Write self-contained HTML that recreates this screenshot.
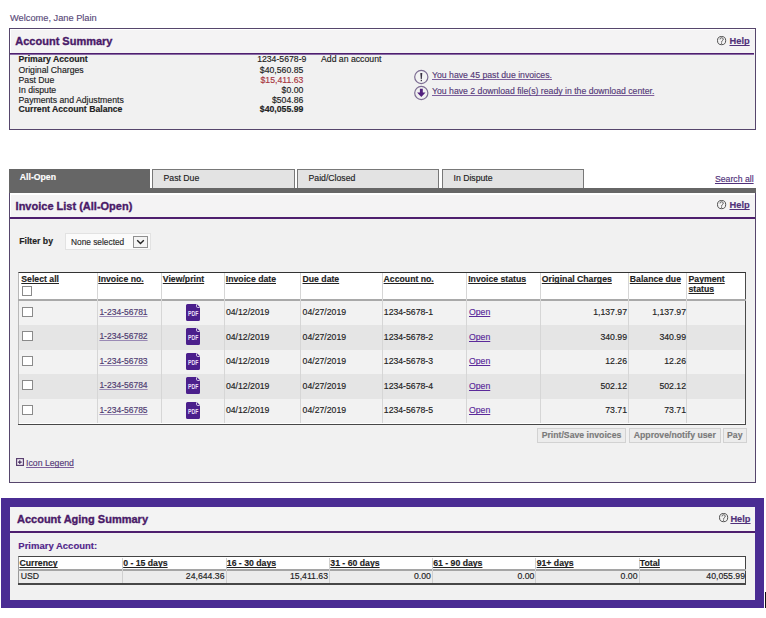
<!DOCTYPE html>
<html><head><meta charset="utf-8"><style>
html,body{margin:0;padding:0;background:#fff;width:766px;height:618px;overflow:hidden;position:relative}
body>div,body>svg{position:absolute}
.t{white-space:nowrap;font-family:"Liberation Sans",sans-serif;-webkit-text-stroke:0.15px currentColor}
svg text{font-family:"Liberation Sans",sans-serif}
</style></head><body>
<div class="t" style="top:11.94px;font-size:9.25px;line-height:12px;color:#5a4a7a;left:10px;">Welcome, Jane Plain</div>
<div style="left:9px;top:28px;width:747px;height:102px;background:#f1f1f1;border:1px solid #56466c;box-sizing:border-box;"></div>
<div style="left:10px;top:29px;width:745px;height:24px;background:#f4f3f4;border-top:1px solid #fff;border-left:1px solid #fff;box-sizing:border-box;"></div>
<div style="left:10px;top:53px;width:744px;height:1px;background:#4e1f6e;"></div>
<div style="left:10px;top:54px;width:744px;height:1px;background:#8a6aa5;"></div>
<div class="t" style="top:35.16px;font-size:11px;line-height:12px;color:#4a1a68;font-weight:bold;left:15.3px;-webkit-text-stroke:0.35px currentColor;">Account Summary</div>
<svg style="left:717px;top:36.3px;width:10px;height:10px" viewBox="0 0 10 10"><circle cx="4.6" cy="4.6" r="4.1" fill="none" stroke="#3d3d3d" stroke-width="0.9"/><path d="M3 3.4a1.6 1.6 0 1 1 2.3 1.4c-.5.3-.7.6-.7 1.2v.5" fill="none" stroke="#3d3d3d" stroke-width="0.8"/><rect x="4.1" y="6.8" width="0.9" height="0.9" fill="#3d3d3d"/></svg>
<div class="t" style="top:34.63px;font-size:9.3px;line-height:12px;color:#50307a;font-weight:bold;text-decoration:underline;text-decoration-skip-ink:none;left:729.5px;">Help</div>
<div class="t" style="top:53.42px;font-size:8.7px;line-height:12px;color:#222;font-weight:bold;left:18.5px;">Primary Account</div>
<div class="t" style="top:53.42px;font-size:8.7px;line-height:12px;color:#222;right:459.6px;text-align:right;">1234-5678-9</div>
<div class="t" style="top:63.82px;font-size:8.7px;line-height:12px;color:#222;left:18.5px;">Original Charges</div>
<div class="t" style="top:63.82px;font-size:8.7px;line-height:12px;color:#222;right:462.7px;text-align:right;">$40,560.85</div>
<div class="t" style="top:73.82px;font-size:8.7px;line-height:12px;color:#222;left:18.5px;">Past Due</div>
<div class="t" style="top:73.82px;font-size:8.7px;line-height:12px;color:#a8363e;right:462.7px;text-align:right;">$15,411.63</div>
<div class="t" style="top:83.52px;font-size:8.7px;line-height:12px;color:#222;left:18.5px;">In dispute</div>
<div class="t" style="top:83.52px;font-size:8.7px;line-height:12px;color:#222;right:462.7px;text-align:right;">$0.00</div>
<div class="t" style="top:93.62px;font-size:8.7px;line-height:12px;color:#222;left:18.5px;">Payments and Adjustments</div>
<div class="t" style="top:93.62px;font-size:8.7px;line-height:12px;color:#222;right:462.7px;text-align:right;">$504.86</div>
<div class="t" style="top:102.92px;font-size:8.7px;line-height:12px;color:#222;font-weight:bold;left:18.5px;">Current Account Balance</div>
<div class="t" style="top:102.92px;font-size:8.7px;line-height:12px;color:#222;font-weight:bold;right:462.7px;text-align:right;">$40,055.99</div>
<div class="t" style="top:53.12px;font-size:8.7px;line-height:12px;color:#222;left:321px;">Add an account</div>
<svg style="left:413px;top:69px;width:17px;height:32px" viewBox="0 0 17 32"><circle cx="8.3" cy="8" r="6.6" fill="#fff" fill-opacity="0.2" stroke="#7d6d93" stroke-width="1.2"/><path d="M7.3 4h2l-.5 6.2h-1z" fill="#3a3344"/><rect x="7.7" y="11" width="1.3" height="1.2" fill="#3a3344"/><circle cx="8.3" cy="24" r="6.6" fill="none" stroke="#7d6d93" stroke-width="1.2"/><path d="M6.9 19.8h2.9v3.6h2.7l-4.2 4.5-4.2-4.5h2.8z" fill="#52207e"/></svg>
<div class="t" style="top:68.82px;font-size:8.7px;line-height:12px;color:#553a78;text-decoration:underline;text-decoration-skip-ink:none;left:432px;text-decoration-color:#7d5f9d;">You have 45 past due invoices.</div>
<div class="t" style="top:84.92px;font-size:8.7px;line-height:12px;color:#553a78;text-decoration:underline;text-decoration-skip-ink:none;left:432px;text-decoration-color:#7d5f9d;">You have 2 download file(s) ready in the download center.</div>
<div style="left:9px;top:169px;width:141px;height:24px;background:#666;"></div>
<div class="t" style="top:171.32px;font-size:8.7px;line-height:12px;color:#fff;font-weight:bold;left:19.8px;">All-Open</div>
<div style="left:152px;top:169px;width:143px;height:20px;background:#e3e3e3;border:1px solid #787878;border-bottom:none;box-sizing:border-box;"></div>
<div class="t" style="top:172.12px;font-size:8.7px;line-height:12px;color:#222;left:163.5px;">Past Due</div>
<div style="left:297px;top:169px;width:142.3px;height:20px;background:#e3e3e3;border:1px solid #787878;border-bottom:none;box-sizing:border-box;"></div>
<div class="t" style="top:172.12px;font-size:8.7px;line-height:12px;color:#222;left:308.5px;">Paid/Closed</div>
<div style="left:442px;top:169px;width:142px;height:20px;background:#e3e3e3;border:1px solid #787878;border-bottom:none;box-sizing:border-box;"></div>
<div class="t" style="top:172.12px;font-size:8.7px;line-height:12px;color:#222;left:453.5px;">In Dispute</div>
<div style="left:9px;top:188px;width:747px;height:5px;background:#666;"></div>
<div class="t" style="top:173.12px;font-size:8.7px;line-height:12px;color:#50307a;text-decoration:underline;text-decoration-skip-ink:none;right:12.4px;text-align:right;">Search all</div>
<div style="left:9px;top:193px;width:747px;height:290px;background:#f1f1f1;border:1px solid #56466c;border-top:none;box-sizing:border-box;"></div>
<div style="left:10px;top:193px;width:745px;height:24px;background:#f4f3f4;border-top:2px solid #fff;border-left:1px solid #fff;box-sizing:border-box;"></div>
<div style="left:10px;top:217px;width:745px;height:2px;background:#4e1f6e;"></div>
<div class="t" style="top:200.06px;font-size:11px;line-height:12px;color:#4a1a68;font-weight:bold;left:15.6px;-webkit-text-stroke:0.35px currentColor;">Invoice List (All-Open)</div>
<svg style="left:717px;top:200.3px;width:10px;height:10px" viewBox="0 0 10 10"><circle cx="4.6" cy="4.6" r="4.1" fill="none" stroke="#3d3d3d" stroke-width="0.9"/><path d="M3 3.4a1.6 1.6 0 1 1 2.3 1.4c-.5.3-.7.6-.7 1.2v.5" fill="none" stroke="#3d3d3d" stroke-width="0.8"/><rect x="4.1" y="6.8" width="0.9" height="0.9" fill="#3d3d3d"/></svg>
<div class="t" style="top:198.63px;font-size:9.3px;line-height:12px;color:#50307a;font-weight:bold;text-decoration:underline;text-decoration-skip-ink:none;left:729.5px;">Help</div>
<div class="t" style="top:235.12px;font-size:8.7px;line-height:12px;color:#222;font-weight:bold;left:19.2px;">Filter by</div>
<div style="left:65px;top:232.5px;width:86px;height:17.8px;background:#fbfbfb;border:1px solid #e2e2e2;box-sizing:border-box;"></div>
<div class="t" style="top:235.79px;font-size:9.1px;line-height:12px;color:#2a2a2a;left:70.6px;transform:scaleX(0.915);transform-origin:0 0;">None selected</div>
<div style="left:132.6px;top:236px;width:15.4px;height:12px;background:#f4f4f4;border:1px solid #8f8f8f;box-sizing:border-box;"></div>
<svg style="left:136px;top:239.3px;width:9px;height:6px" viewBox="0 0 9 6"><path d="M1.2 1.2l3.3 3.2 3.3-3.2" fill="none" stroke="#222" stroke-width="1.4"/></svg>
<div style="left:18.4px;top:272px;width:727.6px;height:153px;background:#fff;border-left:1px solid #b8b8b8;border-right:1px solid #4a4a4a;border-top:1px solid #333;box-sizing:border-box;"></div>
<div style="left:19.4px;top:300.5px;width:725.6px;height:24.5px;background:#f2f2f2;"></div>
<div style="left:19.4px;top:325.0px;width:725.6px;height:24.5px;background:#e5e5e5;"></div>
<div style="left:19.4px;top:349.5px;width:725.6px;height:24.5px;background:#f2f2f2;"></div>
<div style="left:19.4px;top:374.0px;width:725.6px;height:24.5px;background:#e5e5e5;"></div>
<div style="left:19.4px;top:398.5px;width:725.6px;height:24.5px;background:#f2f2f2;"></div>
<div style="left:18.4px;top:299px;width:727.6px;height:2px;background:#a9a9a9;"></div>
<div style="left:18.4px;top:423.5px;width:727.6px;height:1.5px;background:#474747;"></div>
<div style="left:97.2px;top:273px;width:1.0px;height:150.2px;background:#d6d6d6;"></div>
<div style="left:161.2px;top:273px;width:1.0px;height:150.2px;background:#d6d6d6;"></div>
<div style="left:224.1px;top:273px;width:1.0px;height:150.2px;background:#d6d6d6;"></div>
<div style="left:300.4px;top:273px;width:1.0px;height:150.2px;background:#d6d6d6;"></div>
<div style="left:381.9px;top:273px;width:1.0px;height:150.2px;background:#d6d6d6;"></div>
<div style="left:466.4px;top:273px;width:1.0px;height:150.2px;background:#d6d6d6;"></div>
<div style="left:540.3px;top:273px;width:1.0px;height:150.2px;background:#d6d6d6;"></div>
<div style="left:628.4px;top:273px;width:1.0px;height:150.2px;background:#d6d6d6;"></div>
<div style="left:686.4px;top:273px;width:1.0px;height:150.2px;background:#d6d6d6;"></div>
<div class="t" style="top:273.12px;font-size:8.7px;line-height:12px;color:#222;font-weight:bold;text-decoration:underline;text-decoration-skip-ink:none;left:21.3px;">Select all</div>
<div class="t" style="top:273.12px;font-size:8.7px;line-height:12px;color:#222;font-weight:bold;text-decoration:underline;text-decoration-skip-ink:none;left:98.3px;">Invoice no.</div>
<div class="t" style="top:273.12px;font-size:8.7px;line-height:12px;color:#222;font-weight:bold;text-decoration:underline;text-decoration-skip-ink:none;left:162.8px;">View/print</div>
<div class="t" style="top:273.12px;font-size:8.7px;line-height:12px;color:#222;font-weight:bold;text-decoration:underline;text-decoration-skip-ink:none;left:225.8px;">Invoice date</div>
<div class="t" style="top:273.12px;font-size:8.7px;line-height:12px;color:#222;font-weight:bold;text-decoration:underline;text-decoration-skip-ink:none;left:302.5px;">Due date</div>
<div class="t" style="top:273.12px;font-size:8.7px;line-height:12px;color:#222;font-weight:bold;text-decoration:underline;text-decoration-skip-ink:none;left:383.6px;">Account no.</div>
<div class="t" style="top:273.12px;font-size:8.7px;line-height:12px;color:#222;font-weight:bold;text-decoration:underline;text-decoration-skip-ink:none;left:468.2px;">Invoice status</div>
<div class="t" style="top:273.12px;font-size:8.7px;line-height:12px;color:#222;font-weight:bold;text-decoration:underline;text-decoration-skip-ink:none;left:541.8px;">Original Charges</div>
<div class="t" style="top:273.12px;font-size:8.7px;line-height:12px;color:#222;font-weight:bold;text-decoration:underline;text-decoration-skip-ink:none;left:629.8px;">Balance due</div>
<div class="t" style="top:273.12px;font-size:8.7px;line-height:12px;color:#222;font-weight:bold;text-decoration:underline;text-decoration-skip-ink:none;left:688.5px;">Payment</div>
<div class="t" style="top:283.32px;font-size:8.7px;line-height:12px;color:#222;font-weight:bold;text-decoration:underline;text-decoration-skip-ink:none;left:688.5px;">status</div>
<div style="left:21.9px;top:286.4px;width:10.1px;height:10.0px;background:#fff;border:1px solid #8a8a8a;box-sizing:border-box;"></div>
<div style="left:22.4px;top:306.5px;width:10.2px;height:10.3px;background:#fff;border:1px solid #8a8a8a;box-sizing:border-box;"></div>
<div class="t" style="top:305.79px;font-size:8.5px;line-height:12px;color:#4d3a70;text-decoration:underline;text-decoration-skip-ink:none;left:99.4px;text-decoration-color:#9a8ab5;">1-234-56781</div>
<svg style="left:186px;top:303.8px;width:14px;height:17px" viewBox="0 0 14 17"><path d="M1.5 0h9.2l3.3 3.3v12.2a1.5 1.5 0 0 1-1.5 1.5h-11A1.5 1.5 0 0 1 0 15.5v-14A1.5 1.5 0 0 1 1.5 0z" fill="#4b1f8c"/><path d="M10.5 0.3v2a1.2 1.2 0 0 0 1.2 1.2h2" fill="none" stroke="#e8dcf5" stroke-width="0.9"/><text x="7.2" y="12.3" font-size="7" font-weight="bold" text-anchor="middle" fill="#eadff7" font-family="Liberation Sans" textLength="10.4" lengthAdjust="spacingAndGlyphs">PDF</text></svg>
<div class="t" style="top:306.12px;font-size:8.7px;line-height:12px;color:#222;left:225.9px;">04/12/2019</div>
<div class="t" style="top:306.12px;font-size:8.7px;line-height:12px;color:#222;left:302.6px;">04/27/2019</div>
<div class="t" style="top:306.12px;font-size:8.7px;line-height:12px;color:#222;left:383.8px;">1234-5678-1</div>
<div class="t" style="top:306.12px;font-size:8.7px;line-height:12px;color:#5b2a9a;text-decoration:underline;text-decoration-skip-ink:none;left:469px;">Open</div>
<div class="t" style="top:306.12px;font-size:8.7px;line-height:12px;color:#222;right:139px;text-align:right;">1,137.97</div>
<div class="t" style="top:306.12px;font-size:8.7px;line-height:12px;color:#222;right:80px;text-align:right;">1,137.97</div>
<div style="left:22.4px;top:331.0px;width:10.2px;height:10.3px;background:#fff;border:1px solid #8a8a8a;box-sizing:border-box;"></div>
<div class="t" style="top:330.29px;font-size:8.5px;line-height:12px;color:#4d3a70;text-decoration:underline;text-decoration-skip-ink:none;left:99.4px;text-decoration-color:#9a8ab5;">1-234-56782</div>
<svg style="left:186px;top:328.3px;width:14px;height:17px" viewBox="0 0 14 17"><path d="M1.5 0h9.2l3.3 3.3v12.2a1.5 1.5 0 0 1-1.5 1.5h-11A1.5 1.5 0 0 1 0 15.5v-14A1.5 1.5 0 0 1 1.5 0z" fill="#4b1f8c"/><path d="M10.5 0.3v2a1.2 1.2 0 0 0 1.2 1.2h2" fill="none" stroke="#e8dcf5" stroke-width="0.9"/><text x="7.2" y="12.3" font-size="7" font-weight="bold" text-anchor="middle" fill="#eadff7" font-family="Liberation Sans" textLength="10.4" lengthAdjust="spacingAndGlyphs">PDF</text></svg>
<div class="t" style="top:330.62px;font-size:8.7px;line-height:12px;color:#222;left:225.9px;">04/12/2019</div>
<div class="t" style="top:330.62px;font-size:8.7px;line-height:12px;color:#222;left:302.6px;">04/27/2019</div>
<div class="t" style="top:330.62px;font-size:8.7px;line-height:12px;color:#222;left:383.8px;">1234-5678-2</div>
<div class="t" style="top:330.62px;font-size:8.7px;line-height:12px;color:#5b2a9a;text-decoration:underline;text-decoration-skip-ink:none;left:469px;">Open</div>
<div class="t" style="top:330.62px;font-size:8.7px;line-height:12px;color:#222;right:139px;text-align:right;">340.99</div>
<div class="t" style="top:330.62px;font-size:8.7px;line-height:12px;color:#222;right:80px;text-align:right;">340.99</div>
<div style="left:22.4px;top:355.5px;width:10.2px;height:10.3px;background:#fff;border:1px solid #8a8a8a;box-sizing:border-box;"></div>
<div class="t" style="top:354.79px;font-size:8.5px;line-height:12px;color:#4d3a70;text-decoration:underline;text-decoration-skip-ink:none;left:99.4px;text-decoration-color:#9a8ab5;">1-234-56783</div>
<svg style="left:186px;top:352.8px;width:14px;height:17px" viewBox="0 0 14 17"><path d="M1.5 0h9.2l3.3 3.3v12.2a1.5 1.5 0 0 1-1.5 1.5h-11A1.5 1.5 0 0 1 0 15.5v-14A1.5 1.5 0 0 1 1.5 0z" fill="#4b1f8c"/><path d="M10.5 0.3v2a1.2 1.2 0 0 0 1.2 1.2h2" fill="none" stroke="#e8dcf5" stroke-width="0.9"/><text x="7.2" y="12.3" font-size="7" font-weight="bold" text-anchor="middle" fill="#eadff7" font-family="Liberation Sans" textLength="10.4" lengthAdjust="spacingAndGlyphs">PDF</text></svg>
<div class="t" style="top:355.12px;font-size:8.7px;line-height:12px;color:#222;left:225.9px;">04/12/2019</div>
<div class="t" style="top:355.12px;font-size:8.7px;line-height:12px;color:#222;left:302.6px;">04/27/2019</div>
<div class="t" style="top:355.12px;font-size:8.7px;line-height:12px;color:#222;left:383.8px;">1234-5678-3</div>
<div class="t" style="top:355.12px;font-size:8.7px;line-height:12px;color:#5b2a9a;text-decoration:underline;text-decoration-skip-ink:none;left:469px;">Open</div>
<div class="t" style="top:355.12px;font-size:8.7px;line-height:12px;color:#222;right:139px;text-align:right;">12.26</div>
<div class="t" style="top:355.12px;font-size:8.7px;line-height:12px;color:#222;right:80px;text-align:right;">12.26</div>
<div style="left:22.4px;top:380.0px;width:10.2px;height:10.3px;background:#fff;border:1px solid #8a8a8a;box-sizing:border-box;"></div>
<div class="t" style="top:379.29px;font-size:8.5px;line-height:12px;color:#4d3a70;text-decoration:underline;text-decoration-skip-ink:none;left:99.4px;text-decoration-color:#9a8ab5;">1-234-56784</div>
<svg style="left:186px;top:377.3px;width:14px;height:17px" viewBox="0 0 14 17"><path d="M1.5 0h9.2l3.3 3.3v12.2a1.5 1.5 0 0 1-1.5 1.5h-11A1.5 1.5 0 0 1 0 15.5v-14A1.5 1.5 0 0 1 1.5 0z" fill="#4b1f8c"/><path d="M10.5 0.3v2a1.2 1.2 0 0 0 1.2 1.2h2" fill="none" stroke="#e8dcf5" stroke-width="0.9"/><text x="7.2" y="12.3" font-size="7" font-weight="bold" text-anchor="middle" fill="#eadff7" font-family="Liberation Sans" textLength="10.4" lengthAdjust="spacingAndGlyphs">PDF</text></svg>
<div class="t" style="top:379.62px;font-size:8.7px;line-height:12px;color:#222;left:225.9px;">04/12/2019</div>
<div class="t" style="top:379.62px;font-size:8.7px;line-height:12px;color:#222;left:302.6px;">04/27/2019</div>
<div class="t" style="top:379.62px;font-size:8.7px;line-height:12px;color:#222;left:383.8px;">1234-5678-4</div>
<div class="t" style="top:379.62px;font-size:8.7px;line-height:12px;color:#5b2a9a;text-decoration:underline;text-decoration-skip-ink:none;left:469px;">Open</div>
<div class="t" style="top:379.62px;font-size:8.7px;line-height:12px;color:#222;right:139px;text-align:right;">502.12</div>
<div class="t" style="top:379.62px;font-size:8.7px;line-height:12px;color:#222;right:80px;text-align:right;">502.12</div>
<div style="left:22.4px;top:404.5px;width:10.2px;height:10.3px;background:#fff;border:1px solid #8a8a8a;box-sizing:border-box;"></div>
<div class="t" style="top:403.79px;font-size:8.5px;line-height:12px;color:#4d3a70;text-decoration:underline;text-decoration-skip-ink:none;left:99.4px;text-decoration-color:#9a8ab5;">1-234-56785</div>
<svg style="left:186px;top:401.8px;width:14px;height:17px" viewBox="0 0 14 17"><path d="M1.5 0h9.2l3.3 3.3v12.2a1.5 1.5 0 0 1-1.5 1.5h-11A1.5 1.5 0 0 1 0 15.5v-14A1.5 1.5 0 0 1 1.5 0z" fill="#4b1f8c"/><path d="M10.5 0.3v2a1.2 1.2 0 0 0 1.2 1.2h2" fill="none" stroke="#e8dcf5" stroke-width="0.9"/><text x="7.2" y="12.3" font-size="7" font-weight="bold" text-anchor="middle" fill="#eadff7" font-family="Liberation Sans" textLength="10.4" lengthAdjust="spacingAndGlyphs">PDF</text></svg>
<div class="t" style="top:404.12px;font-size:8.7px;line-height:12px;color:#222;left:225.9px;">04/12/2019</div>
<div class="t" style="top:404.12px;font-size:8.7px;line-height:12px;color:#222;left:302.6px;">04/27/2019</div>
<div class="t" style="top:404.12px;font-size:8.7px;line-height:12px;color:#222;left:383.8px;">1234-5678-5</div>
<div class="t" style="top:404.12px;font-size:8.7px;line-height:12px;color:#5b2a9a;text-decoration:underline;text-decoration-skip-ink:none;left:469px;">Open</div>
<div class="t" style="top:404.12px;font-size:8.7px;line-height:12px;color:#222;right:139px;text-align:right;">73.71</div>
<div class="t" style="top:404.12px;font-size:8.7px;line-height:12px;color:#222;right:80px;text-align:right;">73.71</div>
<div style="left:537px;top:428.2px;width:89px;height:15.2px;background:#ececec;border:1px solid #d2d2d2;box-sizing:border-box;"></div>
<div class="t" style="left:537px;top:428.2px;width:89px;text-align:center;font-size:8.7px;line-height:15px;font-weight:bold;color:#7a7a7a">Print/Save invoices</div>
<div style="left:629px;top:428.2px;width:91.6px;height:15.2px;background:#ececec;border:1px solid #d2d2d2;box-sizing:border-box;"></div>
<div class="t" style="left:629px;top:428.2px;width:91.6px;text-align:center;font-size:8.7px;line-height:15px;font-weight:bold;color:#7a7a7a">Approve/notify user</div>
<div style="left:723px;top:428.2px;width:23.6px;height:15.2px;background:#ececec;border:1px solid #d2d2d2;box-sizing:border-box;"></div>
<div class="t" style="left:723px;top:428.2px;width:23.6px;text-align:center;font-size:8.7px;line-height:15px;font-weight:bold;color:#7a7a7a">Pay</div>
<svg style="left:16px;top:458px;width:8px;height:8px" viewBox="0 0 8 8"><rect x="0.6" y="0.6" width="6.8" height="6.8" fill="#f8f4fa" stroke="#5a4070" stroke-width="1.2"/><path d="M3.8 2.2v3.8M1.9 4.1h3.8" stroke="#40285a" stroke-width="1.1"/></svg>
<div class="t" style="top:457.02px;font-size:8.7px;line-height:12px;color:#553a78;text-decoration:underline;text-decoration-skip-ink:none;left:26.1px;text-decoration-color:#7d5f9d;">Icon Legend</div>
<div style="left:1px;top:498px;width:763px;height:110px;background:#4a2c93;"></div>
<div style="left:9.7px;top:506.6px;width:745.3px;height:93.0px;background:#f1f1f1;"></div>
<div style="left:9.7px;top:506.6px;width:745.3px;height:24.4px;background:#f3f3f3;"></div>
<div style="left:9.7px;top:531px;width:745.3px;height:2px;background:#4e1f6e;"></div>
<div class="t" style="top:513.16px;font-size:11px;line-height:12px;color:#4a1a68;font-weight:bold;left:17px;-webkit-text-stroke:0.35px currentColor;">Account Aging Summary</div>
<svg style="left:719px;top:512.8px;width:10px;height:10px" viewBox="0 0 10 10"><circle cx="4.6" cy="4.6" r="4.1" fill="none" stroke="#3d3d3d" stroke-width="0.9"/><path d="M3 3.4a1.6 1.6 0 1 1 2.3 1.4c-.5.3-.7.6-.7 1.2v.5" fill="none" stroke="#3d3d3d" stroke-width="0.8"/><rect x="4.1" y="6.8" width="0.9" height="0.9" fill="#3d3d3d"/></svg>
<div class="t" style="top:512.83px;font-size:9.3px;line-height:12px;color:#50307a;font-weight:bold;text-decoration:underline;text-decoration-skip-ink:none;left:730.4px;">Help</div>
<div class="t" style="top:540.26px;font-size:9.5px;line-height:12px;color:#52268a;font-weight:bold;left:18.3px;">Primary Account:</div>
<div style="left:18.3px;top:556px;width:727.7px;height:28.5px;background:#fff;border:1px solid #444;border-left-color:#9a9a9a;border-bottom:none;box-sizing:border-box;"></div>
<div style="left:19.3px;top:570px;width:725.7px;height:13px;background:#ececec;"></div>
<div style="left:18.3px;top:568.5px;width:727.7px;height:2.0px;background:#a5a5a5;"></div>
<div style="left:18.3px;top:583.2px;width:727.7px;height:1.6px;background:#474747;"></div>
<div style="left:121.9px;top:557.5px;width:1.0px;height:25.5px;background:#d0d0d0;"></div>
<div style="left:225.5px;top:557.5px;width:1.0px;height:25.5px;background:#d0d0d0;"></div>
<div style="left:329px;top:557.5px;width:1px;height:25.5px;background:#d0d0d0;"></div>
<div style="left:431.9px;top:557.5px;width:1.0px;height:25.5px;background:#d0d0d0;"></div>
<div style="left:535.4px;top:557.5px;width:1.0px;height:25.5px;background:#d0d0d0;"></div>
<div style="left:638.5px;top:557.5px;width:1.0px;height:25.5px;background:#d0d0d0;"></div>
<div class="t" style="top:556.72px;font-size:8.7px;line-height:12px;color:#222;font-weight:bold;text-decoration:underline;text-decoration-skip-ink:none;left:19.5px;">Currency</div>
<div class="t" style="top:556.72px;font-size:8.7px;line-height:12px;color:#222;font-weight:bold;text-decoration:underline;text-decoration-skip-ink:none;left:123.2px;">0 - 15 days</div>
<div class="t" style="top:556.72px;font-size:8.7px;line-height:12px;color:#222;font-weight:bold;text-decoration:underline;text-decoration-skip-ink:none;left:226.8px;">16 - 30 days</div>
<div class="t" style="top:556.72px;font-size:8.7px;line-height:12px;color:#222;font-weight:bold;text-decoration:underline;text-decoration-skip-ink:none;left:330.3px;">31 - 60 days</div>
<div class="t" style="top:556.72px;font-size:8.7px;line-height:12px;color:#222;font-weight:bold;text-decoration:underline;text-decoration-skip-ink:none;left:433.2px;">61 - 90 days</div>
<div class="t" style="top:556.72px;font-size:8.7px;line-height:12px;color:#222;font-weight:bold;text-decoration:underline;text-decoration-skip-ink:none;left:536.6999999999999px;">91+ days</div>
<div class="t" style="top:556.72px;font-size:8.7px;line-height:12px;color:#222;font-weight:bold;text-decoration:underline;text-decoration-skip-ink:none;left:639.8px;">Total</div>
<div class="t" style="top:570.22px;font-size:8.7px;line-height:12px;color:#222;left:20.7px;">USD</div>
<div class="t" style="top:570.22px;font-size:8.7px;line-height:12px;color:#222;right:541.5px;text-align:right;">24,644.36</div>
<div class="t" style="top:570.22px;font-size:8.7px;line-height:12px;color:#222;right:438px;text-align:right;">15,411.63</div>
<div class="t" style="top:570.22px;font-size:8.7px;line-height:12px;color:#222;right:335.1px;text-align:right;">0.00</div>
<div class="t" style="top:570.22px;font-size:8.7px;line-height:12px;color:#222;right:231.6px;text-align:right;">0.00</div>
<div class="t" style="top:570.22px;font-size:8.7px;line-height:12px;color:#222;right:128.5px;text-align:right;">0.00</div>
<div class="t" style="top:570.22px;font-size:8.7px;line-height:12px;color:#222;right:21px;text-align:right;">40,055.99</div>
<div style="left:765px;top:592px;width:1px;height:16px;background:#111;"></div>
</body></html>
